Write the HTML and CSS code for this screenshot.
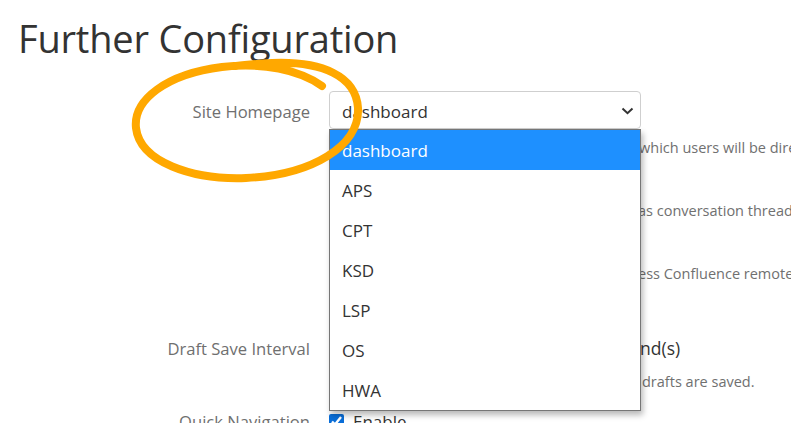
FILE: index.html
```html
<!DOCTYPE html>
<html>
<head>
<meta charset="utf-8">
<link rel="stylesheet" href="styles.css">
</head>
<body>
<div class="page">
  <h1 class="title">Further Configuration</h1>
  <div class="form">
    <div class="row row-home">
      <div class="label">Site Homepage</div>
      <div class="field">
        <div class="select-wrap">
          <div class="select">
            <span>dashboard</span>
            <svg class="chev" width="13" height="8" viewBox="0 0 13 8"><polyline points="1.5,1.5 6.5,6.2 11.5,1.5" fill="none" stroke="#333" stroke-width="2"/></svg>
          </div>
          <ul class="dropdown">
            <li class="active">dashboard</li>
            <li>APS</li>
            <li>CPT</li>
            <li>KSD</li>
            <li>LSP</li>
            <li>OS</li>
            <li>HWA</li>
          </ul>
        </div>
        <div class="help"><span class="lead lead-a">Choose the page or space homepage to </span>which users will be directed after login.</div>
      </div>
    </div>
    <div class="row row-check">
      <div class="label"></div>
      <div class="field">
        <label class="check"><input type="checkbox" checked> Enable</label>
        <div class="help"><span class="lead lead-b">Comments will be displayed in a nested view, </span>as conversation threads.</div>
      </div>
    </div>
    <div class="row row-check">
      <div class="label"></div>
      <div class="field">
        <label class="check"><input type="checkbox"> Enable</label>
        <div class="help"><span class="lead lead-b">Allows external applications and users to acc</span>ess Confluence remotely.</div>
      </div>
    </div>
    <div class="row row-draft">
      <div class="label">Draft Save Interval</div>
      <div class="field">
        <div class="inline"><span class="input">30</span><span class="suffix">second(s)</span></div>
        <div class="help"><span class="lead lead-c">Set the time interval at which </span>drafts are saved.</div>
      </div>
    </div>
    <div class="row row-quick">
      <div class="label">Quick Navigation</div>
      <div class="field">
        <label class="check"><input type="checkbox" checked> Enable</label>
      </div>
    </div>
  </div>
</div>
<svg class="scribble" width="791" height="423" viewBox="0 0 791 423">
  <path d="M 322 86 C 300 70, 262 62, 222 67 C 166 74, 133 100, 136 128 C 140 162, 192 180, 246 178 C 312 175, 360 146, 358 108 C 356 76, 322 61, 272 63 C 256 64, 244 65, 236 66" fill="none" stroke="#ffa800" stroke-width="8" stroke-linecap="round" stroke-linejoin="round"/>
</svg>
</body>
</html>
```

FILE: styles.css
```css
html, body {
  margin: 0;
  padding: 0;
  background: #fff;
  overflow: hidden;
}
body {
  width: 791px;
  height: 423px;
  font-family: "Open Sans", "Noto Sans", sans-serif;
  color: #333;
  position: relative;
}
.page {
  padding: 14px 0 0 18px;
}
.title {
  margin: 0;
  font-weight: 400;
  font-size: 38px;
  line-height: 48px;
  color: #333;
  letter-spacing: -0.2px;
}
.form {
  margin-top: 29px;
}
.row {
  display: grid;
  grid-template-columns: 292px 1fr;
  column-gap: 19px;
  white-space: nowrap;
}
.label {
  text-align: right;
  font-size: 16.6px;
  color: #6f6f6f;
}
.row-home .label {
  line-height: 42px;
}
.select-wrap {
  position: relative;
  width: 312px;
}
.select {
  box-sizing: border-box;
  height: 38px;
  border: 1px solid #cfcfcf;
  border-radius: 4px;
  display: flex;
  align-items: center;
  justify-content: space-between;
  padding: 2px 6px 0 12px;
  font-size: 17px;
  color: #333;
}
.chev {
  display: block;
}
.dropdown {
  position: absolute;
  left: 0;
  top: 100%;
  width: 312px;
  box-sizing: border-box;
  margin: 0;
  padding: 0;
  list-style: none;
  background: #fff;
  border: 1px solid #767676;
  box-shadow: 2px 4px 6px rgba(0, 0, 0, 0.28);
  z-index: 5;
}
.dropdown li {
  height: 40px;
  line-height: 41px;
  padding-left: 12px;
  font-size: 17px;
  color: #333;
}
.dropdown li.active {
  background: #1e90ff;
  color: #fff;
}
.help {
  font-size: 14.5px;
  color: #707070;
  line-height: 20px;
}
.lead {
  display: inline-block;
  overflow: hidden;
  vertical-align: top;
}
.lead-a {
  width: 310px;
}
.lead-b {
  width: 309px;
}
.lead-c {
  width: 313px;
}
.row-home .help {
  margin-top: 9px;
}
.row-check {
  margin-top: 19px;
}
.check {
  display: flex;
  align-items: center;
  gap: 9px;
  height: 24px;
  font-size: 17px;
  color: #333;
}
.check input {
  margin: 0;
  width: 15px;
  height: 15px;
  accent-color: #0a6ed8;
}
.row-draft {
  margin-top: 46px;
}
.row-draft .label {
  line-height: 38px;
}
.inline {
  display: flex;
  align-items: center;
  height: 36px;
  gap: 10px;
}
.input {
  box-sizing: border-box;
  width: 264px;
  height: 36px;
  border: 1px solid #cfcfcf;
  border-radius: 4px;
  padding: 0 12px;
  line-height: 34px;
  font-size: 17px;
}
.suffix {
  font-size: 17.5px;
  color: #333;
}
.row-draft .help {
  margin-top: 6px;
}
.row-quick {
  margin-top: 17px;
}
.row-quick .label {
  line-height: 26px;
}
.scribble {
  position: absolute;
  left: 0;
  top: 0;
  pointer-events: none;
  z-index: 10;
}
```
